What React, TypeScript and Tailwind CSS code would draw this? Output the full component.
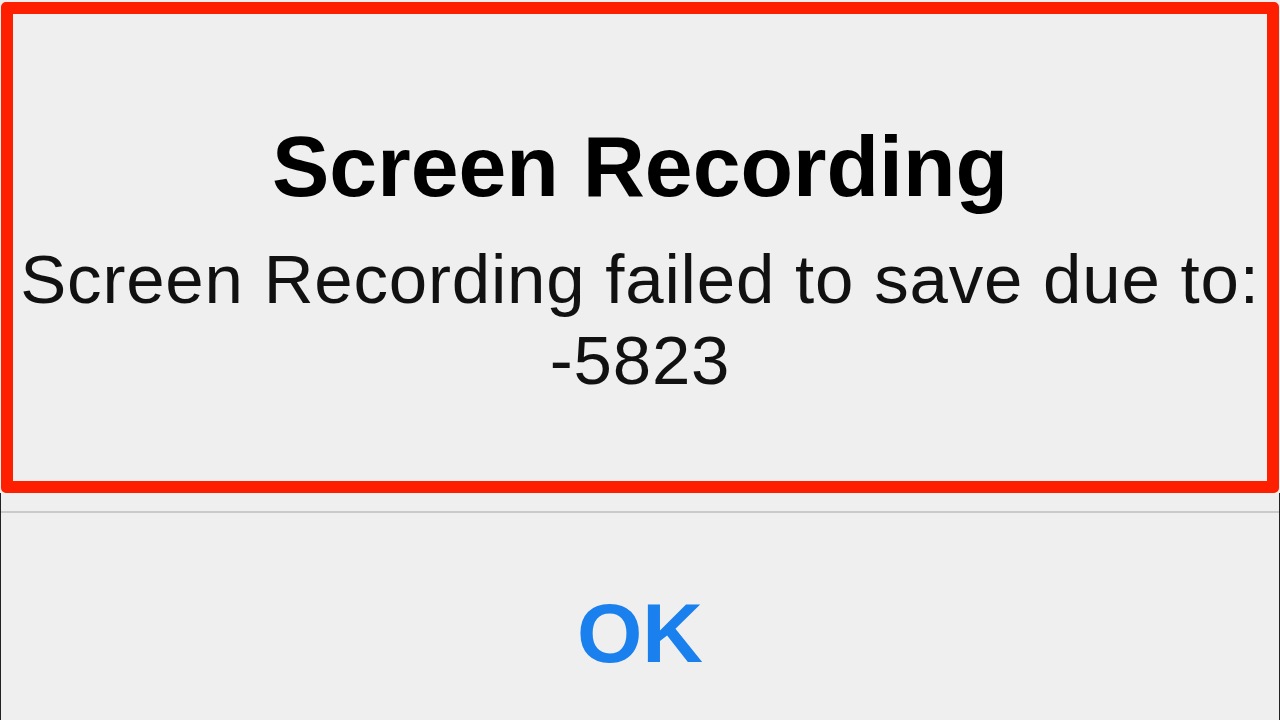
export default function App() {
    return (
        <div
            className="w-[1280px] h-[720px] bg-[#efefef] flex flex-col overflow-hidden"
            style={{ fontFamily: '"Liberation Sans", Arial, sans-serif' }}
        >
            {/* marco rojo con el mensaje */}
            <div className="pt-[2px] px-[1px]">
                <div className="h-[491px] border-[12px] border-[#fe1f00] rounded-[5px] flex flex-col items-center text-black">
                    <h1 className="mt-[109px] text-[86px] leading-[86px] font-bold">Screen Recording</h1>
                    <p className="mt-[30px] text-[69px] leading-[81px] tracking-[0.8px] text-center text-[#111]">
                        Screen Recording failed to save due to:
                        <br />
                        -5823
                    </p>
                </div>
            </div>

            <div className="flex-1 flex flex-col border-x border-[#222]">
                <div className="mt-[18px] h-[2px] bg-[#cacaca]" />
                <div className="flex justify-center pt-[78px]">
                    <button className="text-[84px] leading-[84px] font-bold text-[#1a80ee]">OK</button>
                </div>
            </div>
        </div>
    )
}
